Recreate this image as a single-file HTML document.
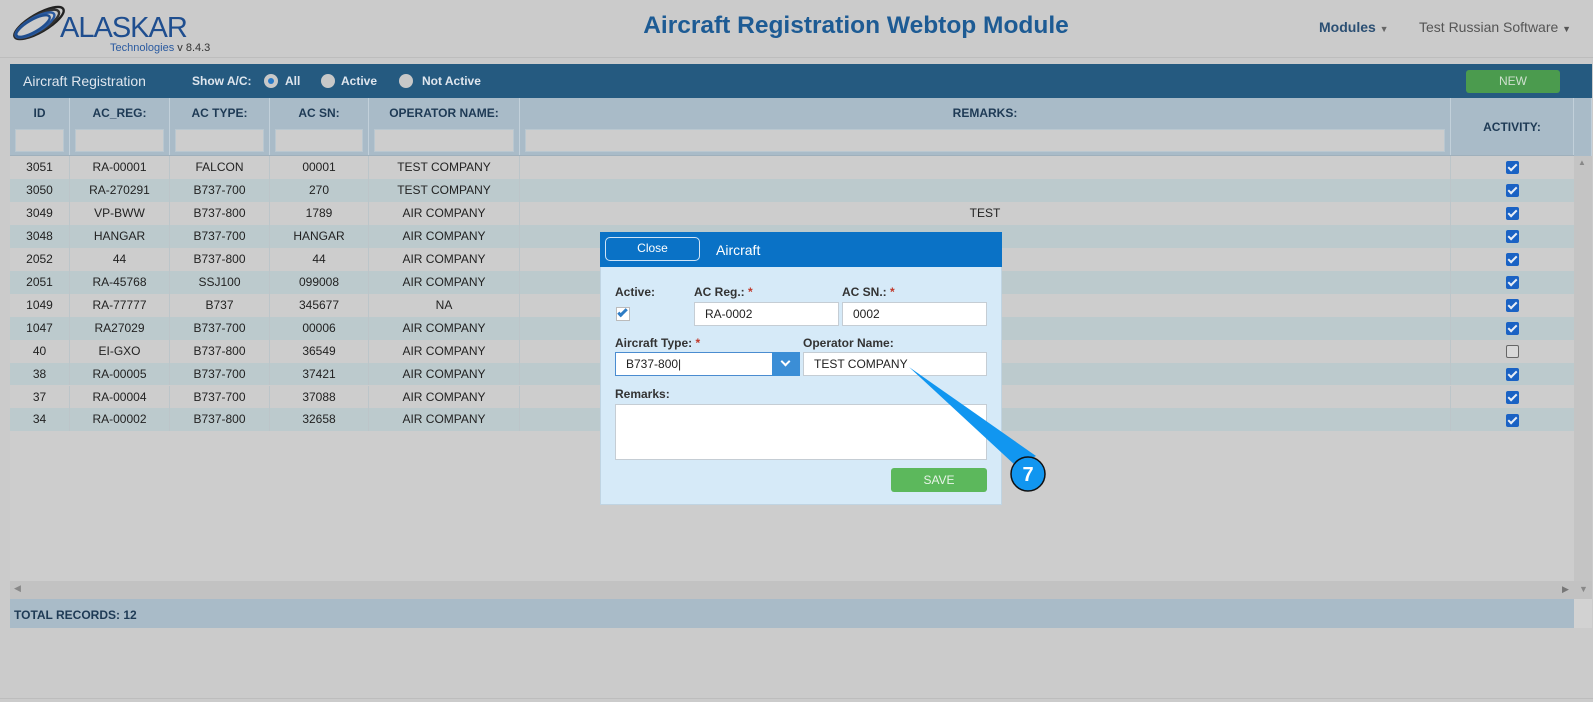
<!DOCTYPE html>
<html><head><meta charset="utf-8"><style>
*{box-sizing:border-box;margin:0;padding:0}
body{width:1593px;height:702px;background:#cbcbcb;font-family:"Liberation Sans",Arial,sans-serif;position:relative;overflow:hidden;font-size:12px;color:#222}
.a{position:absolute}
.hdr{left:0;top:0;width:1593px;height:58px;border-bottom:1px solid #bdbdbd;background:#cbcbcb}
.title{left:0;width:1712px;top:12px;text-align:center;font-size:24.5px;font-weight:bold;color:#1d5b94}
.nav{top:19px;font-size:14px;color:#555}
.bar{left:10px;top:64px;width:1582px;height:34px;background:#255a80}
.rad{width:14px;height:14px;border-radius:50%;background:#c8c8c8;top:74px}
.th{top:98px;height:58px;background:#a9bbc8;border-right:1px solid #c2d0da;color:#1e3a55;font-weight:bold;text-align:center;font-size:12px}
.th span{display:block;margin-top:8px}
.fin{position:absolute;left:5px;right:5px;top:31px;height:23px;background:#cdcdcd;border:1px solid #b9c7d0}
.row{left:10px;width:1564px;height:22.95px;display:flex;font-size:12px;line-height:23px;text-align:center}
.row div{border-right:1px solid #bcc5c9}
.cb{display:inline-block;width:13px;height:13px;border-radius:2px;background:#1a62c4;vertical-align:middle;position:relative}
.cb:after{content:"";position:absolute;left:4px;top:1px;width:3px;height:7px;border:solid #e8eef6;border-width:0 2px 2px 0;transform:rotate(45deg)}
.cb.off{background:#d9d9d9;border:1px solid #666}
.cb.off:after{display:none}
.lbl{font-size:12px;font-weight:bold;color:#333}
.req{color:#c0392b}
.inp{background:#fff;border:1px solid #c5cdd4;font-size:12px;line-height:23px;padding-left:10px;color:#222}
</style></head><body>
<div class="a hdr"></div>
<svg class="a" style="left:8px;top:4px" width="60" height="40" viewBox="0 0 60 40">
<g fill="none" stroke-width="2.4">
<ellipse cx="31" cy="19" rx="28" ry="9" transform="rotate(-30 31 19)" stroke="#222"/>
<ellipse cx="29" cy="20" rx="25" ry="8" transform="rotate(-30 29 20)" stroke="#333"/>
<ellipse cx="27" cy="21" rx="22" ry="7" transform="rotate(-30 27 21)" stroke="#2a5aa0"/>
<ellipse cx="25" cy="22" rx="19" ry="6" transform="rotate(-30 25 22)" stroke="#1f4e8f"/>
</g></svg>
<div class="a" style="left:60px;top:12px;font-size:29px;color:#1f4e8f;letter-spacing:-1px">ALASKAR</div>
<div class="a" style="left:110px;top:42px;font-size:11px;color:#2a5aa0">Technologies <span style="color:#333">v 8.4.3</span></div>
<div class="a title">Aircraft Registration Webtop Module</div>
<div class="a nav" style="left:1319px;font-weight:bold;color:#2b4f73">Modules <span style="font-size:9px;color:#666">▼</span></div>
<div class="a nav" style="left:1419px">Test Russian Software <span style="font-size:9px">▼</span></div>

<div class="a bar"></div>
<div class="a" style="left:23px;top:73px;font-size:14px;color:#dfe6ee">Aircraft Registration</div>
<div class="a" style="left:192px;top:74px;font-weight:bold;color:#dfe6ee">Show A/C:</div>
<div class="a rad" style="left:264px;background:#c8c8c8;border:4px solid #c8c8c8"><div style="width:6px;height:6px;border-radius:50%;background:#2a7bc8"></div></div>
<div class="a" style="left:285px;top:74px;font-weight:bold;color:#dfe6ee">All</div>
<div class="a rad" style="left:321px"></div>
<div class="a" style="left:341px;top:74px;font-weight:bold;color:#dfe6ee">Active</div>
<div class="a rad" style="left:399px"></div>
<div class="a" style="left:422px;top:74px;font-weight:bold;color:#dfe6ee">Not Active</div>
<div class="a" style="left:1466px;top:70px;width:94px;height:23px;background:#4b9b4e;border-radius:3px;color:#cfe0cf;text-align:center;line-height:23px;font-size:12px">NEW</div>

<div class="a th" style="left:10px;width:60px"><span>ID</span><div class="fin"></div></div>
<div class="a th" style="left:70px;width:100px"><span>AC_REG:</span><div class="fin"></div></div>
<div class="a th" style="left:170px;width:100px"><span>AC TYPE:</span><div class="fin"></div></div>
<div class="a th" style="left:270px;width:99px"><span>AC SN:</span><div class="fin"></div></div>
<div class="a th" style="left:369px;width:151px"><span>OPERATOR NAME:</span><div class="fin"></div></div>
<div class="a th" style="left:520px;width:931px"><span>REMARKS:</span><div class="fin"></div></div>
<div class="a th" style="left:1451px;width:123px"><span style="margin-top:22px">ACTIVITY:</span></div>
<div class="a th" style="left:1574px;width:18px"></div>
<div class="a" style="left:10px;top:155px;width:1564px;height:1px;background:#9fb0bc"></div>

<div class="a" style="left:10px;top:156px;width:1564px;height:425px;background:#cdcdcd"></div>
<div class="a" style="left:1574px;top:156px;width:18px;height:425px;background:#c4c4c4"></div>
<div class="a" style="left:1578px;top:158px;font-size:8px;color:#888">▲</div>
<div class="a" id="rows" style="left:0;top:156px"></div>

<div class="a" style="left:10px;top:581px;width:1582px;height:18px;background:#c2c2c2"></div>
<div class="a" style="left:14px;top:583px;font-size:9px;color:#888">◀</div>
<div class="a" style="left:1562px;top:584px;font-size:9px;color:#777">▶</div>
<div class="a" style="left:1579px;top:584px;font-size:9px;color:#888">▼</div>
<div class="a" style="left:10px;top:599px;width:1564px;height:29px;background:#a9bbc8"></div>
<div class="a" style="left:1574px;top:599px;width:18px;height:29px;background:#d2d2d2"></div>
<div class="a" style="left:14px;top:608px;font-weight:bold;color:#1e3a55;font-size:12px">TOTAL RECORDS: 12</div>
<div class="a" style="left:0;top:698px;width:1593px;height:1px;background:#bdbdbd"></div>

<div class="a" style="left:600px;top:232px;width:402px;height:273px;background:#d6eaf8;border:1px solid #c0d4e2"></div>
<div class="a" style="left:600px;top:232px;width:402px;height:35px;background:#0a72c6"></div>
<div class="a" style="left:605px;top:237px;width:95px;height:24px;border:1px solid #cfe3f5;border-radius:5px;color:#fff;text-align:center;line-height:21px;font-size:12px">Close</div>
<div class="a" style="left:716px;top:242px;color:#fff;font-size:14px">Aircraft</div>
<div class="a lbl" style="left:615px;top:285px">Active:</div>
<div class="a lbl" style="left:694px;top:285px">AC Reg.: <span class="req">*</span></div>
<div class="a lbl" style="left:842px;top:285px">AC SN.: <span class="req">*</span></div>
<div class="a" style="left:616px;top:307px;width:14px;height:14px;background:#fff;border:1px solid #bbb"></div>
<div class="a" style="left:620px;top:307px;width:5px;height:10px;border:solid #2e7cc4;border-width:0 3px 3px 0;transform:rotate(45deg)"></div>
<div class="a inp" style="left:694px;top:302px;width:145px;height:24px">RA-0002</div>
<div class="a inp" style="left:842px;top:302px;width:145px;height:24px">0002</div>
<div class="a lbl" style="left:615px;top:336px">Aircraft Type: <span class="req">*</span></div>
<div class="a lbl" style="left:803px;top:336px">Operator Name:</div>
<div class="a inp" style="left:615px;top:352px;width:185px;height:24px;border-color:#4a8cd0">B737-800|</div>
<div class="a" style="left:772px;top:352px;width:28px;height:24px;background:#3b8ed6"></div>
<div class="a" style="left:782px;top:358px;width:7px;height:7px;border:solid #fff;border-width:0 2px 2px 0;transform:rotate(45deg)"></div>
<div class="a inp" style="left:803px;top:352px;width:184px;height:24px">TEST COMPANY</div>
<div class="a lbl" style="left:615px;top:387px">Remarks:</div>
<div class="a inp" style="left:615px;top:404px;width:372px;height:56px"></div>
<div class="a" style="left:891px;top:468px;width:96px;height:24px;background:#5cb85c;border-radius:3px;color:#e8f4e8;text-align:center;line-height:24px">SAVE</div>

<svg class="a" style="left:0;top:0" width="1593" height="702">
<polygon points="909,367 1016,466 1036,456" fill="#1196f0"/>
<circle cx="1028" cy="474" r="17" fill="#1196f0" stroke="#111" stroke-width="1.5"/>
<text x="1028" y="481" text-anchor="middle" font-family="Liberation Sans" font-weight="bold" font-size="20" fill="#fff">7</text>
</svg>

<script>
var d=[["3051","RA-00001","FALCON","00001","TEST COMPANY","",1],["3050","RA-270291","B737-700","270","TEST COMPANY","",1],["3049","VP-BWW","B737-800","1789","AIR COMPANY","TEST",1],["3048","HANGAR","B737-700","HANGAR","AIR COMPANY","",1],["2052","44","B737-800","44","AIR COMPANY","",1],["2051","RA-45768","SSJ100","099008","AIR COMPANY","",1],["1049","RA-77777","B737","345677","NA","",1],["1047","RA27029","B737-700","00006","AIR COMPANY","",1],["40","EI-GXO","B737-800","36549","AIR COMPANY","",0],["38","RA-00005","B737-700","37421","AIR COMPANY","",1],["37","RA-00004","B737-700","37088","AIR COMPANY","",1],["34","RA-00002","B737-800","32658","AIR COMPANY","",1]];
var w=[60,100,100,99,151,931,123],h="";
d.forEach(function(r,i){h+='<div class="a row" style="top:'+(i*22.95)+'px;background:'+(i%2?'#bccacd':'#cdcdcd')+'">';
for(var j=0;j<6;j++)h+='<div style="width:'+w[j]+'px">'+r[j]+'</div>';
h+='<div style="width:123px;border:0"><span class="cb'+(r[6]?'':' off')+'"></span></div></div>';});
document.getElementById('rows').innerHTML=h;
</script>
</body></html>
